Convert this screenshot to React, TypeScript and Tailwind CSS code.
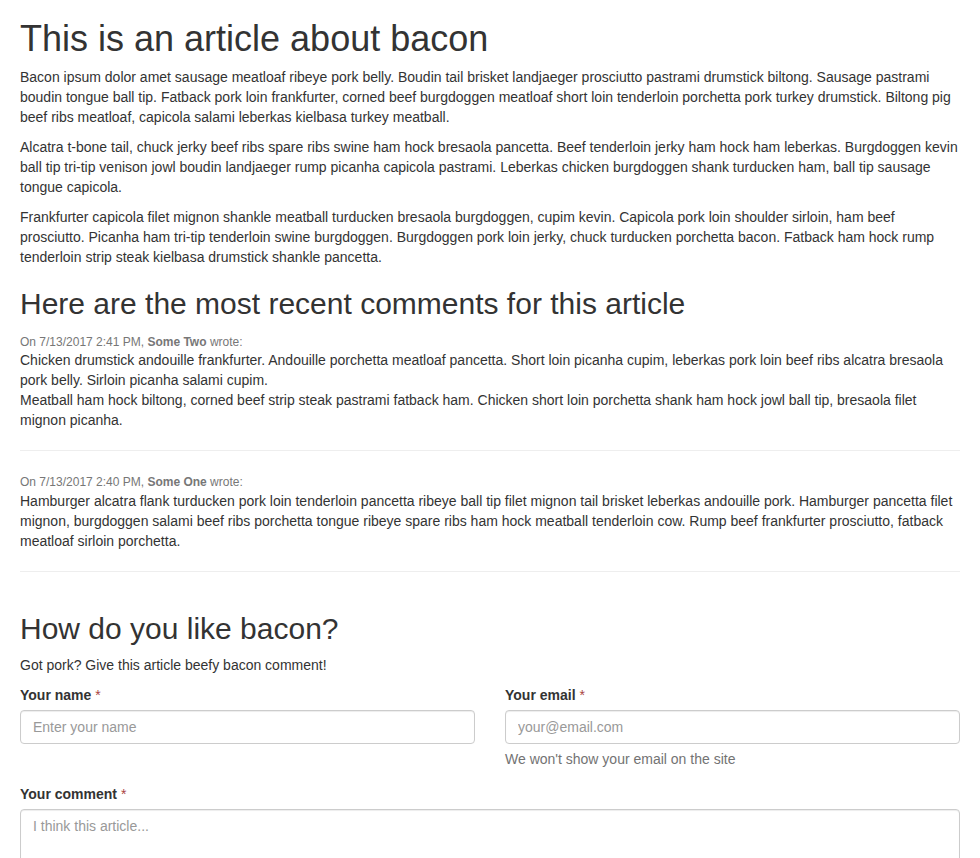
import React from "react";

const inputCls =
  "block w-full h-[34px] px-[12px] py-[6px] text-[14px] leading-[20px] text-[#555555] bg-white border border-[#cccccc] rounded-[4px] shadow-[inset_0_1px_1px_rgba(0,0,0,0.075)] placeholder:text-[#999999] outline-none";

export default function App() {
  return (
    <div
      className="px-[20px] pb-[20px] text-[14px] leading-[20px] text-[#333333] bg-white"
      style={{ fontFamily: '"Liberation Sans", Arial, Helvetica, sans-serif' }}
    >
      <div className="block">
        <h1 className="mt-[19px] mb-[8px] text-[36px] leading-[39.6px] font-normal">
          This is an article about bacon
        </h1>
        <p className="mb-[10px]">
          Bacon ipsum dolor amet sausage meatloaf ribeye pork belly. Boudin tail brisket landjaeger prosciutto pastrami drumstick biltong. Sausage pastrami boudin tongue ball tip. Fatback pork loin frankfurter, corned beef burgdoggen meatloaf short loin tenderloin porchetta pork turkey drumstick. Biltong pig beef ribs meatloaf, capicola salami leberkas kielbasa turkey meatball.
        </p>
        <p className="mb-[10px]">
          Alcatra t-bone tail, chuck jerky beef ribs spare ribs swine ham hock bresaola pancetta. Beef tenderloin jerky ham hock ham leberkas. Burgdoggen kevin ball tip tri-tip venison jowl boudin landjaeger rump picanha capicola pastrami. Leberkas chicken burgdoggen shank turducken ham, ball tip sausage tongue capicola.
        </p>
        <p className="mb-[10px]">
          Frankfurter capicola filet mignon shankle meatball turducken bresaola burgdoggen, cupim kevin. Capicola pork loin shoulder sirloin, ham beef prosciutto. Picanha ham tri-tip tenderloin swine burgdoggen. Burgdoggen pork loin jerky, chuck turducken porchetta bacon. Fatback ham hock rump tenderloin strip steak kielbasa drumstick shankle pancetta.
        </p>
      </div>

      <div className="block">
        <h2 className="mt-[20px] mb-[12px] text-[30px] leading-[33px] font-normal">
          Here are the most recent comments for this article
        </h2>
        <div className="pt-[2px]">
          <div className="text-[12px] leading-[16px] text-[#777777]">
            On 7/13/2017 2:41 PM, <span className="font-bold">Some Two</span> wrote:
          </div>
          <div>
            Chicken drumstick andouille frankfurter. Andouille porchetta meatloaf pancetta. Short loin picanha cupim, leberkas pork loin beef ribs alcatra bresaola pork belly. Sirloin picanha salami cupim.
            <br />
            Meatball ham hock biltong, corned beef strip steak pastrami fatback ham. Chicken short loin porchetta shank ham hock jowl ball tip, bresaola filet mignon picanha.
          </div>
          <hr className="my-[20px] border-0 border-t border-t-[#eeeeee]" />
        </div>
        <div className="pt-[3px]">
          <div className="mb-[1px] text-[12px] leading-[16px] text-[#777777]">
            On 7/13/2017 2:40 PM, <span className="font-bold">Some One</span> wrote:
          </div>
          <div>
            Hamburger alcatra flank turducken pork loin tenderloin pancetta ribeye ball tip filet mignon tail brisket leberkas andouille pork. Hamburger pancetta filet mignon, burgdoggen salami beef ribs porchetta tongue ribeye spare ribs ham hock meatball tenderloin cow. Rump beef frankfurter prosciutto, fatback meatloaf sirloin porchetta.
          </div>
          <hr className="my-[20px] border-0 border-t border-t-[#eeeeee]" />
        </div>
      </div>

      <form className="block pt-[20px]" onSubmit={(e) => e.preventDefault()}>
        <h2 className="mt-0 mb-[10px] text-[30px] leading-[33px] font-normal">
          How do you like bacon?
        </h2>
        <p className="mb-[10px]">Got pork? Give this article beefy bacon comment!</p>
        <div className="grid grid-cols-2 gap-x-[30px]">
          <div className="mb-[15px]">
            <label className="block mb-[5px] font-bold">
              Your name <span className="text-[#a94442] font-normal">*</span>
            </label>
            <input type="text" placeholder="Enter your name" className={inputCls} />
          </div>
          <div className="mb-[15px]">
            <label className="block mb-[5px] font-bold">
              Your email <span className="text-[#a94442] font-normal">*</span>
            </label>
            <input type="email" placeholder="your@email.com" className={inputCls} />
            <span className="block mt-[5px] text-[#737373]">
              We won't show your email on the site
            </span>
          </div>
        </div>
        <div className="mb-[15px]">
          <label className="block mb-[5px] font-bold">
            Your comment <span className="text-[#a94442] font-normal">*</span>
          </label>
          <textarea
            rows={5}
            placeholder="I think this article..."
            className="block w-full h-[120px] px-[12px] py-[6px] text-[14px] leading-[20px] text-[#555555] bg-white border border-[#cccccc] rounded-[4px] shadow-[inset_0_1px_1px_rgba(0,0,0,0.075)] placeholder:text-[#999999] outline-none resize-y"
          />
        </div>
      </form>
    </div>
  );
}
